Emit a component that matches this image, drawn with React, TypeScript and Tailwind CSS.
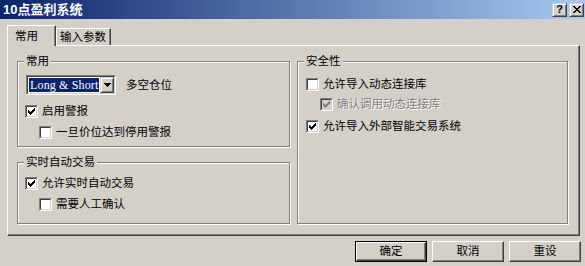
import React from "react";

const raised =
  "border border-t-[#d4d0c8] border-l-[#d4d0c8] border-r-[#404040] border-b-[#404040] shadow-[inset_1px_1px_0_#fff,inset_-1px_-1px_0_#808080] bg-[#d4d0c8]";

function Check({ checked, disabled }: { checked?: boolean; disabled?: boolean }) {
  const cols = [2, 3, 4, 3, 2, 1, 0];
  return (
    <div className="w-[13px] h-[13px] shrink-0 border border-t-[#808080] border-l-[#808080] border-r-white border-b-white">
      <div
        className={`w-full h-full border border-t-[#404040] border-l-[#404040] border-r-[#d4d0c8] border-b-[#d4d0c8] flex items-center justify-center ${
          disabled ? "bg-[#d4d0c8]" : "bg-white"
        }`}
      >
        {checked && (
          <svg width="7" height="7" viewBox="0 0 7 7" shapeRendering="crispEdges">
            {cols.map((y, x) => (
              <rect key={x} x={x} y={y} width="1" height="3" fill={disabled ? "#808080" : "#000"} />
            ))}
          </svg>
        )}
      </div>
    </div>
  );
}

function Row({
  label,
  checked,
  disabled,
  className = "",
}: {
  label: string;
  checked?: boolean;
  disabled?: boolean;
  className?: string;
}) {
  return (
    <div className={`flex items-center h-[13px] gap-[4px] ${className}`}>
      <Check checked={checked} disabled={disabled} />
      <span
        className={`whitespace-nowrap leading-[13px] ${
          disabled ? "text-[#808080] [text-shadow:1px_1px_0_#fff]" : "text-black"
        }`}
      >
        {label}
      </span>
    </div>
  );
}

function Group({
  label,
  className = "",
  boxClass = "",
  children,
}: {
  label: string;
  className?: string;
  boxClass?: string;
  children: React.ReactNode;
}) {
  return (
    <div className={`relative pt-[6px] ${className}`}>
      <div className={`border border-[#808080] shadow-[inset_1px_1px_0_#fff,1px_1px_0_#fff] ${boxClass}`}>
        {children}
      </div>
      <span className="absolute top-0 left-[7px] px-[2px] bg-[#d4d0c8] leading-[13px] whitespace-nowrap">
        {label}
      </span>
    </div>
  );
}

function PushButton({ label, isDefault }: { label: string; isDefault?: boolean }) {
  const inner = (
    <div className="w-full h-full border border-t-white border-l-white border-r-[#404040] border-b-[#404040] shadow-[inset_-1px_-1px_0_#808080] flex items-center justify-center leading-[13px]">
      {label}
    </div>
  );
  return isDefault ? (
    <div className="w-[72px] h-[21px] border border-black">{inner}</div>
  ) : (
    <div className="w-[72px] h-[21px]">{inner}</div>
  );
}

export default function App() {
  return (
    <div className="w-[585px] h-[266px] bg-[#d4d0c8] text-black text-[11.5px] font-['Liberation_Sans','Noto_Sans_CJK_SC',sans-serif] flex flex-col overflow-hidden">
      {/* Title bar */}
      <div className="h-[19px] shrink-0 flex items-center bg-[linear-gradient(to_right,#0a246a,#a6caf0)] pl-[3px] pr-[1px]">
        <span className="text-white font-bold text-[13px] leading-[15px] whitespace-nowrap">10点盈利系统</span>
        <div className="ml-auto flex gap-[2px]">
          <div className={`w-[15px] h-[14px] ${raised} flex items-center justify-center`}>
            <span className="font-bold text-[11px] leading-[11px] font-['Liberation_Sans',sans-serif]">?</span>
          </div>
          <div className={`w-[15px] h-[14px] ${raised} flex items-center justify-center`}>
            <svg width="8" height="7" viewBox="0 0 8 7" shapeRendering="crispEdges">
              <rect x="0" y="0" width="2" height="1" fill="#000" />
              <rect x="6" y="0" width="2" height="1" fill="#000" />
              <rect x="1" y="1" width="2" height="1" fill="#000" />
              <rect x="5" y="1" width="2" height="1" fill="#000" />
              <rect x="2" y="2" width="4" height="1" fill="#000" />
              <rect x="3" y="3" width="2" height="1" fill="#000" />
              <rect x="2" y="4" width="4" height="1" fill="#000" />
              <rect x="1" y="5" width="2" height="1" fill="#000" />
              <rect x="5" y="5" width="2" height="1" fill="#000" />
              <rect x="0" y="6" width="2" height="1" fill="#000" />
              <rect x="6" y="6" width="2" height="1" fill="#000" />
            </svg>
          </div>
        </div>
      </div>

      {/* Tabs */}
      <div className="mt-[6px] h-[20px] shrink-0 flex items-end pl-[7px]">
        <div className="relative z-10 w-[49px] h-[21px] mb-[-1px] bg-[#d4d0c8] border-l border-t border-l-white border-t-white border-r border-r-[#404040] shadow-[inset_-1px_0_0_#808080] pl-[7px] pt-[4px] leading-[13px] whitespace-nowrap">
          常用
        </div>
        <div className="w-[55px] h-[17px] bg-[#d4d0c8] border-l border-t border-l-white border-t-white border-r border-r-[#404040] shadow-[inset_-1px_0_0_#808080] pl-[3px] pt-[2px] leading-[13px] whitespace-nowrap">
          输入参数
        </div>
      </div>

      {/* Panel */}
      <div className="ml-[7px] w-[573px] h-[191px] shrink-0 border border-t-white border-l-white border-r-[#404040] border-b-[#404040] shadow-[inset_-1px_-1px_0_#808080] pl-[9px] pt-[9px] flex gap-[7px]">
        <div className="w-[273px] flex flex-col">
          <Group label="常用" boxClass="h-[86px] pl-[7px] pt-[13px]">
            <div className="flex items-center ml-[1px]">
              <div className="w-[90px] h-[20px] border border-t-[#808080] border-l-[#808080] border-r-white border-b-white">
                <div className="w-full h-full border border-t-[#404040] border-l-[#404040] border-r-[#d4d0c8] border-b-[#d4d0c8] bg-white flex">
                  <div className="flex-1 m-[1px] bg-[#0a246a] text-white font-['Liberation_Serif',serif] text-[12px] leading-[14px] pl-[1px] tracking-[0.15px] whitespace-nowrap overflow-hidden">
                    Long &amp; Short
                  </div>
                  <div className={`w-[14px] h-full ${raised} flex items-center justify-center`}>
                    <svg width="7" height="4" viewBox="0 0 7 4" shapeRendering="crispEdges">
                      <rect x="0" y="0" width="7" height="1" fill="#000" />
                      <rect x="1" y="1" width="5" height="1" fill="#000" />
                      <rect x="2" y="2" width="3" height="1" fill="#000" />
                      <rect x="3" y="3" width="1" height="1" fill="#000" />
                    </svg>
                  </div>
                </div>
              </div>
              <span className="ml-[10px] whitespace-nowrap leading-[13px]">多空仓位</span>
            </div>
            <Row label="启用警报" checked className="mt-[10px]" />
            <Row label="一旦价位达到停用警报" className="mt-[8px] ml-[14px]" />
          </Group>
          <Group label="实时自动交易" className="mt-[9px]" boxClass="h-[62px] pl-[7px] pt-[14px]">
            <Row label="允许实时自动交易" checked />
            <Row label="需要人工确认" className="mt-[8px] ml-[14px]" />
          </Group>
        </div>
        <div className="w-[271px] flex flex-col">
          <Group label="安全性" boxClass="h-[163px] pl-[8px] pt-[16px]">
            <Row label="允许导入动态连接库" />
            <Row label="确认调用动态连接库" checked disabled className="mt-[7px] ml-[14px]" />
            <Row label="允许导入外部智能交易系统" checked className="mt-[9px]" />
          </Group>
        </div>
      </div>

      {/* Buttons */}
      <div className="mt-[5px] flex justify-end gap-[5px] pr-[4px]">
        <PushButton label="确定" isDefault />
        <PushButton label="取消" />
        <PushButton label="重设" />
      </div>
    </div>
  );
}
